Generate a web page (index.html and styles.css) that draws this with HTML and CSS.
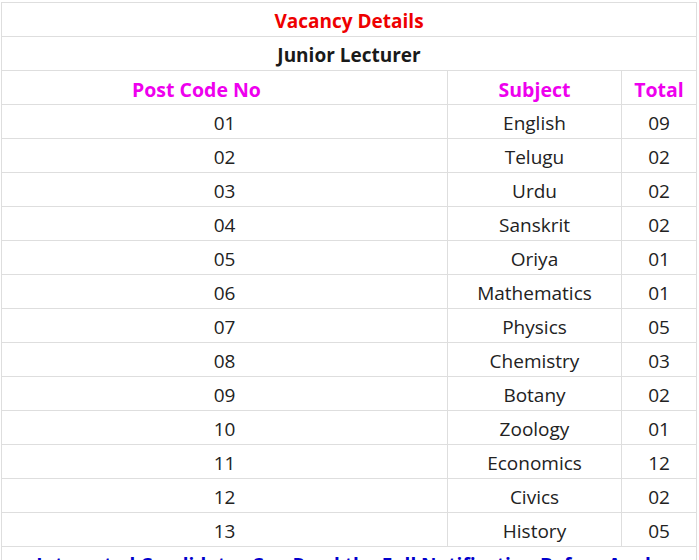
FILE: index.html
```html
<!DOCTYPE html>
<html lang="en">
<head>
<meta charset="utf-8">
<title>Vacancy Details</title>
<link rel="stylesheet" href="styles.css">
</head>
<body>
<table class="vac">
  <colgroup>
    <col class="c1"><col class="c2"><col class="c3">
  </colgroup>
  <tbody>
    <tr><td colspan="3" class="title">Vacancy Details</td></tr>
    <tr><td colspan="3" class="sub">Junior Lecturer</td></tr>
    <tr class="head"><td class="code">Post Code No</td><td>Subject</td><td>Total</td></tr>
    <tr><td>01</td><td>English</td><td>09</td></tr>
    <tr><td>02</td><td>Telugu</td><td>02</td></tr>
    <tr><td>03</td><td>Urdu</td><td>02</td></tr>
    <tr><td>04</td><td>Sanskrit</td><td>02</td></tr>
    <tr><td>05</td><td>Oriya</td><td>01</td></tr>
    <tr><td>06</td><td>Mathematics</td><td>01</td></tr>
    <tr><td>07</td><td>Physics</td><td>05</td></tr>
    <tr><td>08</td><td>Chemistry</td><td>03</td></tr>
    <tr><td>09</td><td>Botany</td><td>02</td></tr>
    <tr><td>10</td><td>Zoology</td><td>01</td></tr>
    <tr><td>11</td><td>Economics</td><td>12</td></tr>
    <tr><td>12</td><td>Civics</td><td>02</td></tr>
    <tr><td>13</td><td>History</td><td>05</td></tr>
    <tr><td colspan="3" class="note">Interested Candidates Can Read the Full Notification Before Apply</td></tr>
  </tbody>
</table>
</body>
</html>
```
FILE: styles.css
```css
html, body {
  margin: 0;
  padding: 0;
  background: #fff;
}
body {
  padding: 2px 0 0 1px;
  font-family: "Open Sans", "Noto Sans", "Liberation Sans", sans-serif;
  color: #222;
}
.vac {
  border-collapse: collapse;
  width: 695px;
  table-layout: fixed;
}
.c1 { width: 446px; }
.c2 { width: 174px; }
.c3 { width: 75px; }
.vac td {
  border: 1px solid #dedede;
  padding: 6px 6px 2px;
  line-height: 25px;
  font-size: 19px;
  text-align: center;
  color: #222;
  white-space: nowrap;
  overflow: hidden;
}
.vac .title {
  color: #ee0000;
  font-weight: 700;
}
.vac .sub {
  color: #1a1a1a;
  font-weight: 700;
}
.vac .head td {
  color: #ee00ee;
  font-weight: 700;
  font-size: 19.5px;
}
.vac .head .code {
  padding-right: 62px;
}
.vac .note {
  color: #0000cc;
  font-weight: 700;
}
```
